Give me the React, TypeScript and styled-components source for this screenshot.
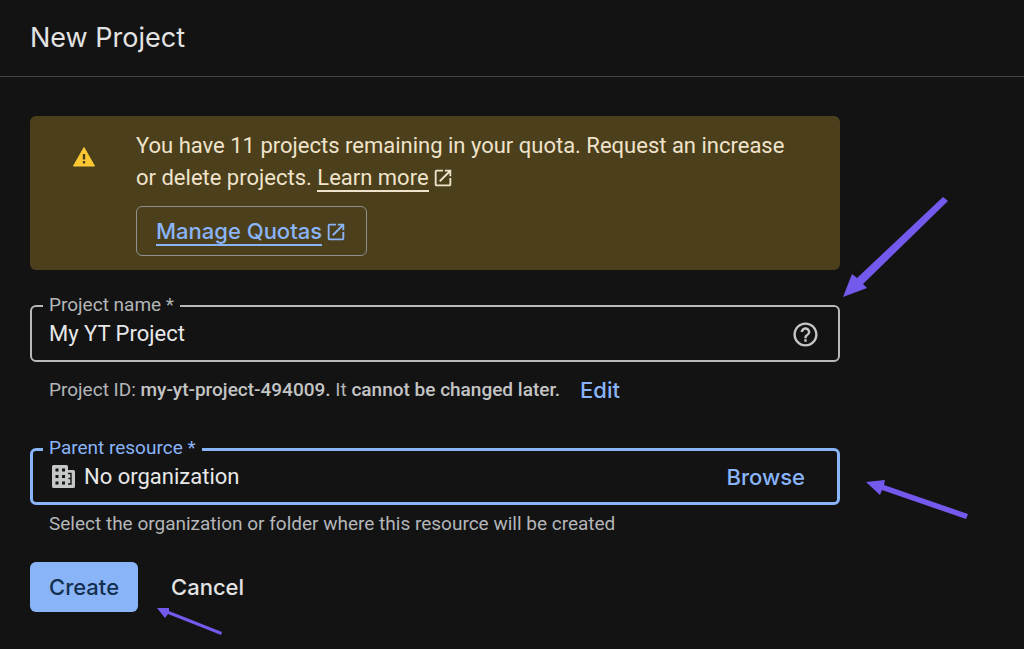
import React from "react";
import styled, { createGlobalStyle } from "styled-components";
import { MdOpenInNew, MdHelpOutline } from "react-icons/md";

const body = `Roboto, "Noto Sans", sans-serif`;
const display = `"Google Sans", Inter, Roboto, sans-serif`;

const GlobalStyle = createGlobalStyle`
  *, *::before, *::after { box-sizing: border-box; }
  body {
    margin: 0;
    background: #131314;
    color: #e3e3e3;
    font-family: ${body};
    font-size: 22px;
    line-height: 32px;
  }
  button, input { font: inherit; }
`;

const Page = styled.div`
  position: relative;
  min-height: 100vh;
`;

const Header = styled.header`
  padding: 18px 30px;
  border-bottom: 1px solid #444649;
`;

const Title = styled.h1`
  margin: 0;
  font: 400 27px/40px ${display};
`;

const Form = styled.form`
  display: flex;
  flex-direction: column;
  max-width: 870px;
  padding: 39px 30px 30px;
`;

const Notice = styled.section`
  display: flex;
  align-items: flex-start;
  gap: 40px;
  padding: 14px 32px 14px 42px;
  margin-bottom: 26px;
  border-radius: 6px;
  background: #4b3f1c;
  color: #efe3cb;
`;

const NoticeIcon = styled.svg`
  flex: none;
  width: 24px;
  height: 24px;
  margin-top: 15px;
`;

const NoticeBody = styled.div`
  display: flex;
  flex-direction: column;
  align-items: flex-start;
  gap: 12px;
`;

const NoticeText = styled.p`
  margin: 0;
`;

const TextLink = styled.a`
  color: inherit;
  text-decoration: none;
  white-space: nowrap;

  span { border-bottom: 2px solid currentColor; }
  svg {
    width: 22px;
    height: 22px;
    margin-left: 3px;
    vertical-align: -4px;
  }
`;

const OutlinedLink = styled(TextLink)`
  padding: 8px 19px;
  border: 1px solid #8e918f;
  border-radius: 6px;
  color: #8ab4f8;
  font-family: ${display};
  font-weight: 500;
`;

const Field = styled.fieldset<{ $active?: boolean }>`
  min-width: 0;
  margin: 0;
  padding: 0 18px 0 ${(p) => (p.$active ? 16 : 17)}px;
  border: ${(p) => (p.$active ? "3px" : "2px")} solid ${(p) => (p.$active ? "#8ab4f8" : "#b9b9b9")};
  border-radius: 6px;
`;

const Legend = styled.legend<{ $active?: boolean }>`
  height: 20px;
  margin-left: -6px;
  padding: 0 6px;
  color: ${(p) => (p.$active ? "#8ab4f8" : "#b4b6b8")};
  font-size: 19px;
  line-height: 18px;
`;

const FieldRow = styled.div`
  display: flex;
  align-items: center;
  gap: 9px;
  height: 44px;
  padding-bottom: 8px;
`;

const BrowseRow = styled(FieldRow)`
  height: 43px;
  padding: 0 14px 8px 3px;
`;

const TextInput = styled.input`
  flex: 1;
  min-width: 0;
  padding: 0;
  border: 0;
  outline: 0;
  background: transparent;
  color: #e8e8e8;
`;

const IconButton = styled.button`
  display: flex;
  padding: 0;
  border: 0;
  background: none;
  color: #c4c7c5;

  svg { width: 29px; height: 29px; }
`;

const Hint = styled.p`
  display: flex;
  align-items: center;
  gap: 20px;
  margin: 0;
  padding: 0 19px;
  color: #b4b6b8;
  font-size: 19px;

  strong { font-weight: 500; color: #c4c4c4; }
`;

const TextButton = styled.button<{ $plain?: boolean }>`
  padding: 0;
  border: 0;
  background: none;
  color: ${(p) => (p.$plain ? "#e3e3e3" : "#8ab4f8")};
  font-family: ${display};
  font-size: 22px;
  font-weight: 500;
`;

const ProjectHint = styled(Hint)`
  margin: 12px 0 33px;
`;

const ParentHint = styled(Hint)`
  margin: 3px 0 22px;
`;

const Actions = styled.div`
  display: flex;
  gap: 33px;
`;

const PrimaryButton = styled(TextButton)`
  height: 50px;
  padding: 0 19px;
  border-radius: 6px;
  background: #8ab4f8;
  color: #14304f;
`;

const Arrow = styled.svg`
  position: absolute;
  fill: #7559ec;
  pointer-events: none;
`;

const FirstArrow = styled(Arrow)`
  left: 840px;
  top: 194px;
`;

const SecondArrow = styled(Arrow)`
  left: 862px;
  top: 476px;
`;

const ThirdArrow = styled(Arrow)`
  left: 154px;
  top: 604px;
`;

export default function App() {
  return (
    <Page>
      <GlobalStyle />
      <Header>
        <Title>New Project</Title>
      </Header>
      <Form onSubmit={(e: React.FormEvent) => e.preventDefault()}>
        <Notice>
          <NoticeIcon viewBox="0 0 24 24" aria-label="Warning">
            <path d="M12 2.5 1.5 21h21z" fill="#fcc934" stroke="#fcc934" strokeLinejoin="round" />
            <path d="M10.8 9h2.4v5.4h-2.4zM10.8 16h2.4v2.4h-2.4z" fill="#4b3f1c" />
          </NoticeIcon>
          <NoticeBody>
            <NoticeText>
              You have 11 projects remaining in your quota. Request an increase or delete projects.{" "}
              <TextLink href="#learn">
                <span>Learn more</span>
                <MdOpenInNew />
              </TextLink>
            </NoticeText>
            <OutlinedLink href="#quotas">
              <span>Manage Quotas</span>
              <MdOpenInNew />
            </OutlinedLink>
          </NoticeBody>
        </Notice>

        <Field>
          <Legend>
            <label htmlFor="name">Project name *</label>
          </Legend>
          <FieldRow>
            <TextInput id="name" defaultValue="My YT Project" />
            <IconButton type="button" aria-label="Help">
              <MdHelpOutline />
            </IconButton>
          </FieldRow>
        </Field>
        <ProjectHint>
          <span>
            Project ID: <strong>my-yt-project-494009.</strong> It <strong>cannot be changed later.</strong>
          </span>
          <TextButton type="button">Edit</TextButton>
        </ProjectHint>

        <Field $active>
          <Legend $active>
            <label htmlFor="parent">Parent resource *</label>
          </Legend>
          <BrowseRow>
            <svg width="23" height="23" viewBox="0 0 23 23" aria-hidden="true">
              <path
                d="M1.5 0h13A1.5 1.5 0 0 1 16 1.5V5h5.5A1.5 1.5 0 0 1 23 6.5v15a1.5 1.5 0 0 1-1.5 1.5h-20A1.5 1.5 0 0 1 0 21.5v-20A1.5 1.5 0 0 1 1.5 0z"
                fill="#c4c7c5"
              />
              <path
                d="M3.5 3.5h3v3h-3zM10 3.5h3v3h-3zM3.5 10h3v3h-3zM10 10h3v3h-3zM3.5 16.5h3v3h-3zM10 16.5h3v3h-3z"
                fill="#131314"
              />
              <path d="M16 8.500h3v10.500h-3M16.500 13.500h2.500" fill="none" stroke="#131314" strokeWidth="1.4" />
            </svg>
            <TextInput id="parent" defaultValue="No organization" />
            <TextButton type="button">Browse</TextButton>
          </BrowseRow>
        </Field>
        <ParentHint>Select the organization or folder where this resource will be created</ParentHint>

        <Actions>
          <PrimaryButton type="submit">Create</PrimaryButton>
          <TextButton type="button" $plain>Cancel</TextButton>
        </Actions>
      </Form>

      <FirstArrow width="112" height="106" viewBox="840 194 112 106" aria-hidden="true">
        <path d="M843 297 852 274 857 278 943 197 948 201 863 284 867 288z" />
      </FirstArrow>
      <SecondArrow width="110" height="46" viewBox="862 476 110 46" aria-hidden="true">
        <path d="M866 482 885 480 884 485 968 514 966 519 882 490 880 495z" />
      </SecondArrow>
      <ThirdArrow width="72" height="34" viewBox="154 604 72 34" aria-hidden="true">
        <path d="M157 608 169 608 169 611 222 632 221 635 168 614 165 618z" />
      </ThirdArrow>
    </Page>
  );
}
